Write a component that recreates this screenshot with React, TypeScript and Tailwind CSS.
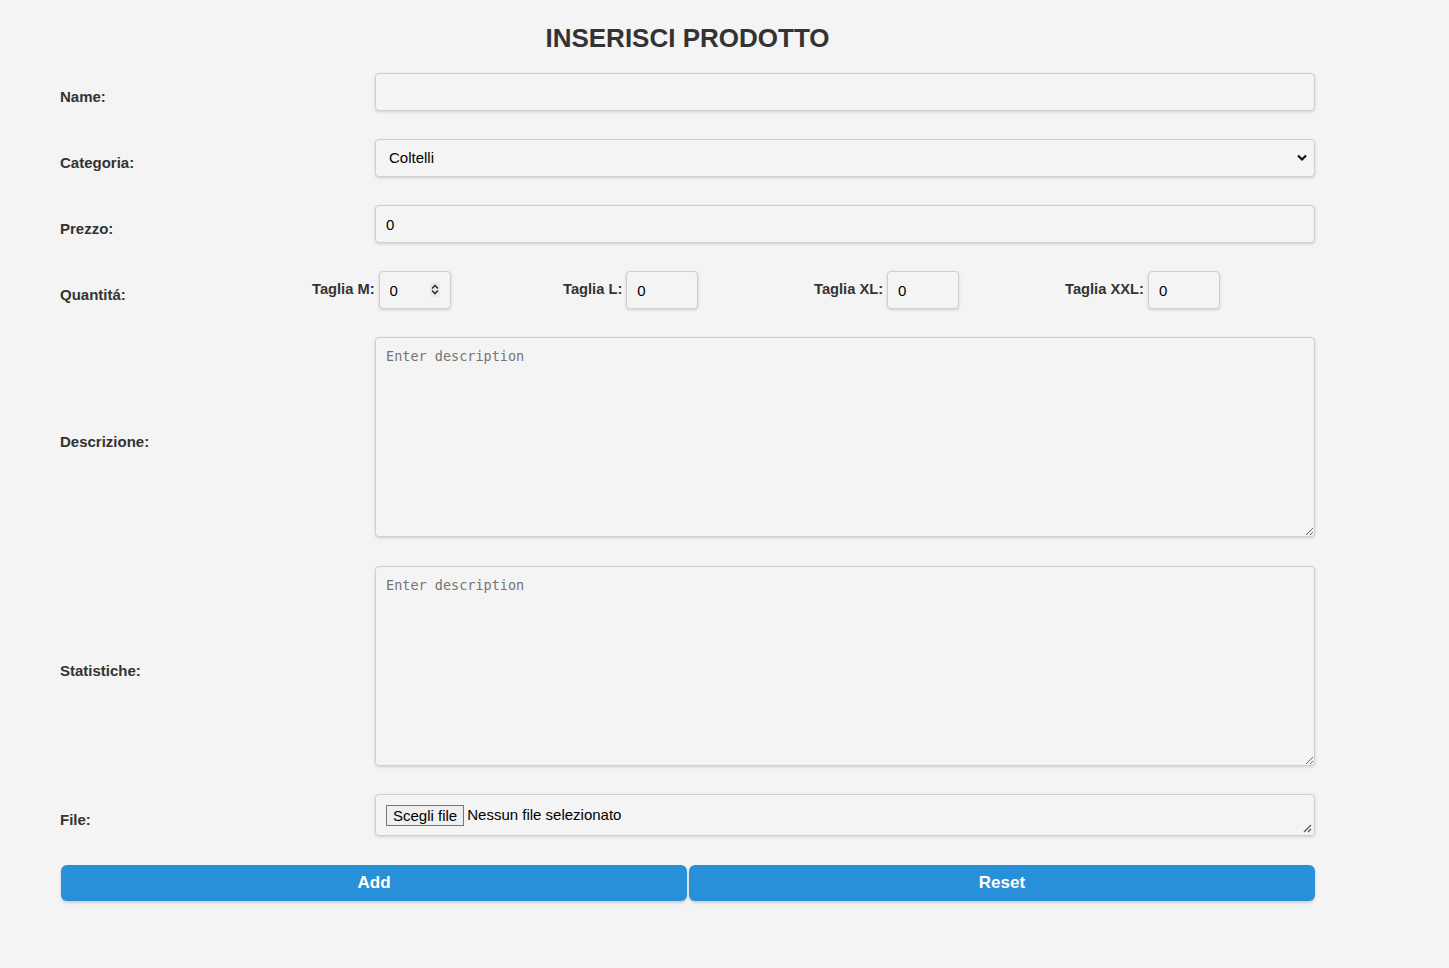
import React from "react";

const labelCls =
  "font-['Liberation_Sans',Arial,sans-serif] font-bold text-[15px] text-[#333]";
const inputCls =
  "w-full h-[38px] rounded-[4px] border border-[#cfcfcf] bg-[#f4f4f4] px-[10px] text-[15px] text-black font-['Liberation_Sans',Arial,sans-serif] shadow-[0_1px_3px_rgba(0,0,0,0.15)] outline-none";
const areaCls =
  "block w-full h-[200px] rounded-[4px] border border-[#cfcfcf] bg-[#f4f4f4] p-[10px] pt-[9px] text-[13.5px] leading-[18px] font-['DejaVu_Sans_Mono',monospace] text-black placeholder:text-[#757575] shadow-[0_1px_3px_rgba(0,0,0,0.15)] outline-none";

function Row({
  label,
  children,
  pb = "pb-[10px]",
}: {
  label: string;
  children: React.ReactNode;
  pb?: string;
}) {
  return (
    <div className="grid grid-cols-[315px_940px] items-center">
      <div className={labelCls}>{label}</div>
      <div className={pb}>{children}</div>
    </div>
  );
}

function SizeField({ label, spinner }: { label: string; spinner?: boolean }) {
  return (
    <div className="flex items-center gap-[4px] pb-[10px] pl-[1px]">
      <span className="font-['Liberation_Sans',Arial,sans-serif] font-bold text-[14.7px] text-[#333] -translate-y-[1px]">
        {label}
      </span>
      <div className="relative w-[72px]">
        <input readOnly defaultValue="0" className={inputCls} />
        {spinner && (
          <svg
            className="absolute right-[11px] top-[11px]"
            width="10"
            height="15"
            viewBox="0 0 10 15"
          >
            <rect x="0" y="0" width="10" height="15" fill="#ececec" />
            <path d="M2 6.5 L5 3.5 L8 6.5" stroke="#333" strokeWidth="1.6" fill="none" />
            <path d="M2 8.5 L5 11.5 L8 8.5" stroke="#333" strokeWidth="1.6" fill="none" />
          </svg>
        )}
      </div>
    </div>
  );
}

export default function App() {
  return (
    <div className="min-h-[968px] w-full bg-[#f4f4f4] font-['Liberation_Sans',Arial,sans-serif]">
      <div className="ml-[60px] w-[1255px] pt-[23px]">
        <h1 className="text-center text-[26px] leading-[30px] font-bold text-[#333] mb-[20px]">
          INSERISCI PRODOTTO
        </h1>
        <div className="flex flex-col gap-[18px]">
          <Row label="Name:">
            <input readOnly className={inputCls} />
          </Row>
          <Row label="Categoria:">
            <div className="relative">
              <div className={inputCls + " flex items-center pl-[13px]"}>Coltelli</div>
              <svg
                className="absolute right-[8px] top-[15px]"
                width="10"
                height="8"
                viewBox="0 0 10 8"
              >
                <path d="M1 1.5 L5 5.5 L9 1.5" stroke="#111" strokeWidth="2.2" fill="none" />
              </svg>
            </div>
          </Row>
          <Row label="Prezzo:">
            <input readOnly defaultValue="0" className={inputCls} />
          </Row>
          <div className="grid grid-cols-5 items-center">
            <div className={labelCls}>Quantitá:</div>
            <SizeField label="Taglia M:" spinner />
            <SizeField label="Taglia L:" />
            <SizeField label="Taglia XL:" />
            <SizeField label="Taglia XXL:" />
          </div>
          <Row label="Descrizione:" pb="pb-[11px]">
            <textarea readOnly placeholder="Enter description" className={areaCls} />
          </Row>
          <Row label="Statistiche:" pb="pb-[10px]">
            <textarea readOnly placeholder="Enter description" className={areaCls} />
          </Row>
          <Row label="File:" pb="pb-[11px]">
            <div className="relative h-[42px] w-full rounded-[4px] border border-[#cfcfcf] bg-[#f4f4f4] shadow-[0_1px_3px_rgba(0,0,0,0.15)] flex items-center pl-[10px] text-[15px] text-black">
              <span className="border border-[#767676] bg-[#efefef] px-[6px] leading-[19px] text-black">
                Scegli file
              </span>
              <span className="ml-[3px]">Nessun file selezionato</span>
              <svg
                className="absolute right-[2px] bottom-[2px]"
                width="10"
                height="10"
                viewBox="0 0 10 10"
              >
                <path d="M2 9 L9 2 M6 9 L9 6" stroke="#555" strokeWidth="1.3" />
              </svg>
            </div>
          </Row>
          <div className="flex gap-[2px] pl-[1px]">
            <button className="flex-1 h-[36px] rounded-[6px] bg-[#2890d9] text-white font-bold text-[17px] shadow-[0_2px_3px_rgba(0,0,0,0.15)]">
              Add
            </button>
            <button className="flex-1 h-[36px] rounded-[6px] bg-[#2890d9] text-white font-bold text-[17px] shadow-[0_2px_3px_rgba(0,0,0,0.15)]">
              Reset
            </button>
          </div>
        </div>
      </div>
    </div>
  );
}
